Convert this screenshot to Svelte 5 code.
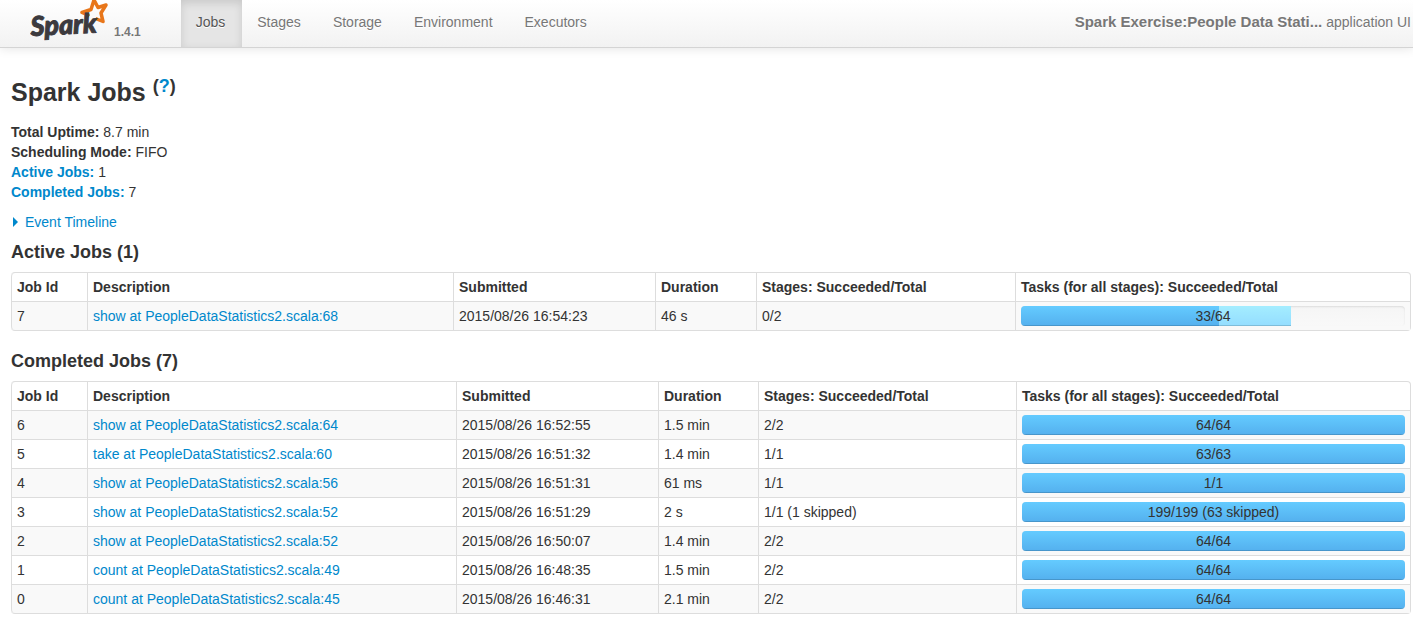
<script lang="ts">
	type Job = {
		id: number;
		description: string;
		submitted: string;
		duration: string;
		stages: string;
		done: number;
		running?: number;
		total: number;
		skipped?: number;
	};

	const tabs = ['Jobs', 'Stages', 'Storage', 'Environment', 'Executors'];
	let current = $state('Jobs');

	const headers = [
		'Job Id',
		'Description',
		'Submitted',
		'Duration',
		'Stages: Succeeded/Total',
		'Tasks (for all stages): Succeeded/Total'
	];

	const active: Job[] = [
		{ id: 7, description: 'show at PeopleDataStatistics2.scala:68', submitted: '2015/08/26 16:54:23', duration: '46 s', stages: '0/2', done: 33, running: 12, total: 64 }
	];

	const completed: Job[] = [
		{ id: 6, description: 'show at PeopleDataStatistics2.scala:64', submitted: '2015/08/26 16:52:55', duration: '1.5 min', stages: '2/2', done: 64, total: 64 },
		{ id: 5, description: 'take at PeopleDataStatistics2.scala:60', submitted: '2015/08/26 16:51:32', duration: '1.4 min', stages: '1/1', done: 63, total: 63 },
		{ id: 4, description: 'show at PeopleDataStatistics2.scala:56', submitted: '2015/08/26 16:51:31', duration: '61 ms', stages: '1/1', done: 1, total: 1 },
		{ id: 3, description: 'show at PeopleDataStatistics2.scala:52', submitted: '2015/08/26 16:51:29', duration: '2 s', stages: '1/1 (1 skipped)', done: 199, total: 199, skipped: 63 },
		{ id: 2, description: 'show at PeopleDataStatistics2.scala:52', submitted: '2015/08/26 16:50:07', duration: '1.4 min', stages: '2/2', done: 64, total: 64 },
		{ id: 1, description: 'count at PeopleDataStatistics2.scala:49', submitted: '2015/08/26 16:48:35', duration: '1.5 min', stages: '2/2', done: 64, total: 64 },
		{ id: 0, description: 'count at PeopleDataStatistics2.scala:45', submitted: '2015/08/26 16:46:31', duration: '2.1 min', stages: '2/2', done: 64, total: 64 }
	];

	// relative column weights
	const activeCols = [76, 366, 202, 101, 259, 395];
	const completedCols = [76, 369, 202, 100, 258, 394];

	const share = (n: number, total: number) => (n / total) * 100;
	const sum = (list: number[]) => list.reduce((a, b) => a + b, 0);
</script>

{#snippet jobTable(jobs: Job[], cols: number[])}
	<table>
		<colgroup>
			{#each cols as c}
				<col style="width: {share(c, sum(cols))}%" />
			{/each}
		</colgroup>
		<thead>
			<tr>
				{#each headers as h}
					<th scope="col">{h}</th>
				{/each}
			</tr>
		</thead>
		<tbody>
			{#each jobs as job}
				<tr>
					<td>{job.id}</td>
					<td><a href="#job-{job.id}">{job.description}</a></td>
					<td>{job.submitted}</td>
					<td>{job.duration}</td>
					<td>{job.stages}</td>
					<td>
						<div class="progress">
							<div class="bar done" style="width: {share(job.done, job.total)}%"></div>
							<div class="bar running" style="width: {share(job.running ?? 0, job.total)}%"></div>
							<span>{job.done}/{job.total}{job.skipped ? ` (${job.skipped} skipped)` : ''}</span>
						</div>
					</td>
				</tr>
			{/each}
		</tbody>
	</table>
{/snippet}

<nav class="navbar">
	<a class="brand" href="#home">
		<svg width="80" height="42" viewBox="0 0 80 42" role="img" aria-label="Spark">
			<path
				class="star"
				d="M56 17.5 L58 15 L52 12.5 L61 9.5 L64 0 L68 7.5 L76 5 L71 13 L73 21.5 L65.5 18.5"
			/>
			<text x="1" y="36" transform="rotate(-3 1 36)">Spark</text>
		</svg>
		<span class="version">1.4.1</span>
	</a>
	<ul class="tabs">
		{#each tabs as tab}
			<li>
				<a
					href="#{tab.toLowerCase()}"
					class:active={tab == current}
					onclick={() => (current = tab)}>{tab}</a
				>
			</li>
		{/each}
	</ul>
	<p class="app-name"><strong>Spark Exercise:People Data Stati...</strong> application UI</p>
</nav>

<main>
	<h3>Spark Jobs <sup>(<a href="#help">?</a>)</sup></h3>

	<ul class="summary">
		<li><strong>Total Uptime:</strong> 8.7 min</li>
		<li><strong>Scheduling Mode:</strong> FIFO</li>
		<li><a href="#active"><strong>Active Jobs:</strong></a> 1</li>
		<li><a href="#completed"><strong>Completed Jobs:</strong></a> 7</li>
	</ul>

	<a class="timeline" href="#timeline"><span class="arrow"></span>Event Timeline</a>

	<h4 id="active">Active Jobs ({active.length})</h4>
	{@render jobTable(active, activeCols)}

	<h4 id="completed">Completed Jobs ({completed.length})</h4>
	{@render jobTable(completed, completedCols)}
</main>

<style>
	:global(body) {
		margin: 0;
		background: #fff;
		color: #333;
		font: 14px/20px 'Liberation Sans', Arial, sans-serif;
	}
	a {
		color: #0088cc;
		text-decoration: none;
	}
	ul {
		list-style: none;
		margin: 0;
		padding: 0;
	}

	.navbar {
		display: flex;
		height: 47px;
		background: linear-gradient(#fff, #f2f2f2);
		border-bottom: 1px solid #d4d4d4;
		box-shadow: 0 1px 10px rgba(0, 0, 0, 0.1);
		color: #777;
		white-space: nowrap;
	}
	.brand {
		display: flex;
		align-items: flex-start;
		gap: 4px;
		padding: 0 40px 0 30px;
		color: #777;
	}
	.brand text {
		font: italic 900 27px Lato, sans-serif;
		fill: #3c3a3e;
		stroke: #3c3a3e;
		stroke-width: 1;
	}
	.star {
		fill: none;
		stroke: #e8761a;
		stroke-width: 3.5;
		stroke-linejoin: round;
	}
	.version {
		margin-top: 22px;
		font-size: 12px;
		font-weight: bold;
	}
	.tabs {
		display: flex;
	}
	.tabs a {
		display: block;
		padding: 12px 17px 15px 15px;
		color: #777;
		text-shadow: 0 1px 0 #fff;
	}
	.tabs a.active {
		color: #555;
		background: #e5e5e5;
		box-shadow: inset 0 3px 8px rgba(0, 0, 0, 0.125);
	}
	.app-name {
		margin: 12px 2px 0 auto;
		text-shadow: 0 1px 0 #fff;
	}
	.app-name strong {
		font-size: 15px;
	}

	main {
		padding: 24px 2px 10px 11px;
	}
	h3 {
		margin: 0 0 10px;
		font-size: 25px;
		line-height: 40px;
	}
	sup {
		position: relative;
		top: -9px;
		font-size: 18px;
		line-height: 0;
		vertical-align: baseline;
	}
	.summary {
		margin-bottom: 10px;
	}
	.timeline {
		display: flex;
		align-items: center;
	}
	.arrow {
		margin: 0 7px 0 2px;
		border-left: 5px solid #0088cc;
		border-top: 5px solid transparent;
		border-bottom: 5px solid transparent;
	}
	h4 {
		margin: 10px 0;
		font-size: 18px;
		line-height: 20px;
	}

	table {
		width: 100%;
		margin-bottom: 20px;
		table-layout: fixed;
		border: 1px solid #ddd;
		border-left: 0;
		border-collapse: separate;
		border-spacing: 0;
		border-radius: 4px;
	}
	th,
	td {
		padding: 4px 5px;
		border-left: 1px solid #ddd;
		text-align: left;
	}
	td {
		border-top: 1px solid #ddd;
	}
	th:first-child {
		border-top-left-radius: 4px;
	}
	tr:last-child td:first-child {
		border-bottom-left-radius: 4px;
	}
	tbody tr:nth-child(odd) td {
		background: #f9f9f9;
	}

	.progress {
		position: relative;
		display: flex;
		height: 20px;
		overflow: hidden;
		border-radius: 4px;
		background: linear-gradient(#f5f5f5, #f9f9f9);
		box-shadow: inset 0 1px 2px rgba(0, 0, 0, 0.1);
	}
	.bar {
		box-shadow: inset 0 -1px 0 rgba(0, 0, 0, 0.15);
	}
	.done {
		background: linear-gradient(#64cbff, #54b0ee);
	}
	.running {
		background: linear-gradient(#a4edff, #94ddff);
	}
	.progress span {
		position: absolute;
		inset: 0;
		text-align: center;
	}
</style>
